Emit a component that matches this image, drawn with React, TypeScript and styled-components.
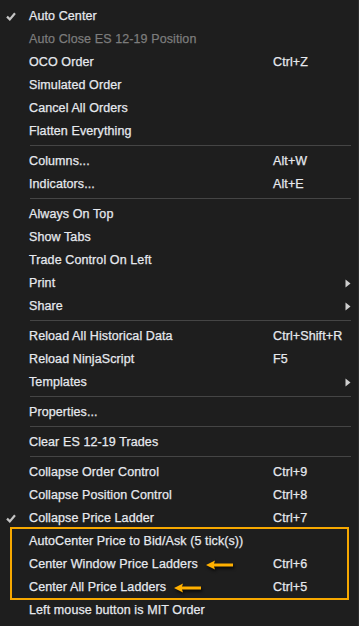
import React from 'react';
import styled, { createGlobalStyle } from 'styled-components';

type Item =
  | { kind: 'sep' }
  | {
      kind: 'item';
      label: string;
      shortcut?: string;
      checked?: boolean;
      disabled?: boolean;
      submenu?: boolean;
      pointer?: boolean;
    };

const top: Item[] = [
  { kind: 'item', label: 'Auto Center', checked: true },
  { kind: 'item', label: 'Auto Close ES 12-19 Position', disabled: true },
  { kind: 'item', label: 'OCO Order', shortcut: 'Ctrl+Z' },
  { kind: 'item', label: 'Simulated Order' },
  { kind: 'item', label: 'Cancel All Orders' },
  { kind: 'item', label: 'Flatten Everything' },
  { kind: 'sep' },
  { kind: 'item', label: 'Columns...', shortcut: 'Alt+W' },
  { kind: 'item', label: 'Indicators...', shortcut: 'Alt+E' },
  { kind: 'sep' },
  { kind: 'item', label: 'Always On Top' },
  { kind: 'item', label: 'Show Tabs' },
  { kind: 'item', label: 'Trade Control On Left' },
  { kind: 'item', label: 'Print', submenu: true },
  { kind: 'item', label: 'Share', submenu: true },
  { kind: 'sep' },
  { kind: 'item', label: 'Reload All Historical Data', shortcut: 'Ctrl+Shift+R' },
  { kind: 'item', label: 'Reload NinjaScript', shortcut: 'F5' },
  { kind: 'item', label: 'Templates', submenu: true },
  { kind: 'sep' },
  { kind: 'item', label: 'Properties...' },
  { kind: 'sep' },
  { kind: 'item', label: 'Clear ES 12-19 Trades' },
  { kind: 'sep' },
  { kind: 'item', label: 'Collapse Order Control', shortcut: 'Ctrl+9' },
  { kind: 'item', label: 'Collapse Position Control', shortcut: 'Ctrl+8' },
  { kind: 'item', label: 'Collapse Price Ladder', shortcut: 'Ctrl+7', checked: true },
];

// the items framed in orange
const highlighted: Item[] = [
  { kind: 'item', label: 'AutoCenter Price to Bid/Ask (5 tick(s))' },
  { kind: 'item', label: 'Center Window Price Ladders', shortcut: 'Ctrl+6', pointer: true },
  { kind: 'item', label: 'Center All Price Ladders', shortcut: 'Ctrl+5', pointer: true },
];

const bottom: Item[] = [{ kind: 'item', label: 'Left mouse button is MIT Order' }];

const CheckIcon = () => (
  <svg width="10" height="9" viewBox="0 0 10 9">
    <path d="M1 4.6 L3.8 7.4 L9 1.2" fill="none" stroke="#c4c4c4" strokeWidth="2.2" />
  </svg>
);

const SubArrow = () => (
  <svg width="6" height="9" viewBox="0 0 6 9">
    <path d="M0.5 0.5 L5.5 4.5 L0.5 8.5 Z" fill="#cfcfcf" />
  </svg>
);

const PointerArrow = () => (
  <svg width="30" height="14" viewBox="0 0 30 14" style={{ filter: 'drop-shadow(1px 2px 1.5px rgba(0,0,0,0.8))' }}>
    <path d="M0 7 L9 2.5 L8 5.6 L27 5.6 L27 8.4 L8 8.4 L9 11.5 Z" fill="#ffb000" />
  </svg>
);

const renderItems = (items: Item[]) =>
  items.map((it, i) =>
    it.kind === 'sep' ? (
      <Separator key={'s' + i} />
    ) : (
      <Row key={it.label}>
        <CheckCell>{it.checked && <CheckIcon />}</CheckCell>
        <Label $disabled={it.disabled}>
          {it.label}
          {it.pointer && (
            <PointerWrap>
              <PointerArrow />
            </PointerWrap>
          )}
        </Label>
        <Shortcut>{it.shortcut}</Shortcut>
        <ArrowCell>{it.submenu && <SubArrow />}</ArrowCell>
      </Row>
    )
  );

export default function App() {
  return (
    <>
      <GlobalStyle />
      <Menu>
        {renderItems(top)}
        <Highlight>
          <HighlightInner>{renderItems(highlighted)}</HighlightInner>
        </Highlight>
        {renderItems(bottom)}
      </Menu>
    </>
  );
}

const GlobalStyle = createGlobalStyle`
  html, body {
    margin: 0;
    padding: 0;
    background: #1e1e1e;
  }
  body {
    font-family: 'Liberation Sans', Arial, sans-serif;
  }
`;

const Menu = styled.div`
  width: 359px;
  height: 626px;
  box-sizing: border-box;
  padding: 4px 0;
  background: #1e1e1e;
  border-right: 1px solid #2b2b2b;
  display: flex;
  flex-direction: column;
`;

const Row = styled.div`
  height: 23px;
  box-sizing: border-box;
  padding-top: 1px;
  display: grid;
  grid-template-columns: 29px 244px 1fr 13px;
  align-items: center;
  font-size: 12.5px;
  letter-spacing: 0.1px;
  color: #e6e9ee;
  -webkit-text-stroke: 0.25px currentColor;
`;

const CheckCell = styled.div`
  display: flex;
  align-items: center;
  justify-content: flex-start;
  padding-left: 6px;
  padding-top: 1px;
`;

const Label = styled.div<{ $disabled?: boolean }>`
  display: flex;
  align-items: center;
  white-space: nowrap;
  color: ${(p) => (p.$disabled ? '#7c7c7c' : 'inherit')};
`;

const PointerWrap = styled.span`
  display: inline-flex;
  margin-left: 8px;
  margin-top: 1px;
`;

const Shortcut = styled.div`
  white-space: nowrap;
`;

const ArrowCell = styled.div`
  display: flex;
  align-items: center;
`;

const Separator = styled.div`
  height: 7px;
  display: flex;
  align-items: center;
  padding: 0 7px 0 30px;

  &::after {
    content: '';
    flex: 1;
    height: 1px;
    background: #454545;
  }
`;

const Highlight = styled.div`
  margin: -2px 9px -2px 10px;
  border: 2px solid #f7a800;
`;

const HighlightInner = styled.div`
  margin: 0 -9px 0 -12px;
`;
